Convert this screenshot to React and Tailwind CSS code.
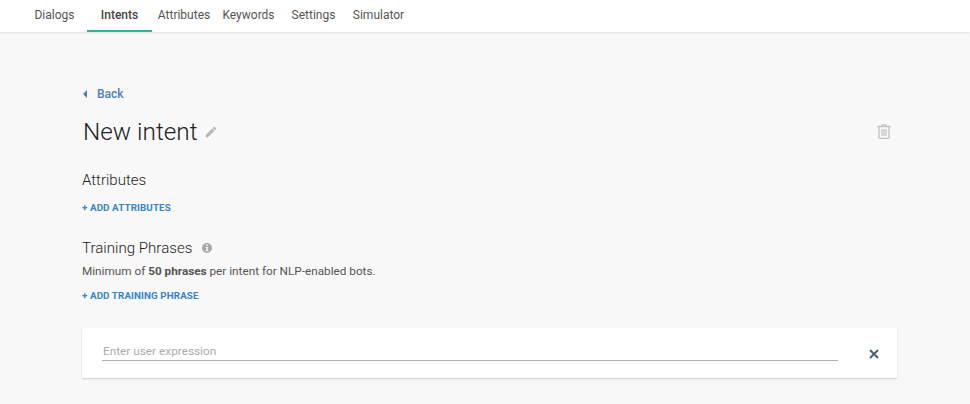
import React from 'react';

const tabs = [
  { label: 'Dialogs', w: 'w-[65px]' },
  { label: 'Intents', w: 'w-[65px]', active: true },
  { label: 'Attributes', w: 'w-[64px]' },
  { label: 'Keywords', w: 'w-[65px]' },
  { label: 'Settings', w: 'w-[65px]' },
  { label: 'Simulator', w: 'w-[65px]' },
];

function Pencil() {
  return (
    <svg width="14" height="14" viewBox="0 0 24 24" fill="#b5b5b5">
      <path d="M3 17.25V21h3.75L17.81 9.94l-3.75-3.75L3 17.25zM20.71 7.04a1 1 0 0 0 0-1.41l-2.34-2.34a1 1 0 0 0-1.41 0l-1.83 1.83 3.75 3.75 1.83-1.83z" />
    </svg>
  );
}

function Trash() {
  return (
    <svg className="mb-[1px]" width="14" height="15" viewBox="0 0 14 15" fill="none" stroke="#c2c2c2">
      <path d="M0.5 2.5h13" strokeWidth="1.4" />
      <path d="M5 2.5V0.8h4v1.7" strokeWidth="1.2" />
      <path d="M2 3v10.2c0 .7.5 1.2 1.2 1.2h7.6c.7 0 1.2-.5 1.2-1.2V3" strokeWidth="1.3" />
      <path d="M5 5v7M7 5v7M9 5v7" strokeWidth="1.2" />
    </svg>
  );
}

function Info() {
  return (
    <svg width="10" height="10" viewBox="0 0 10 10">
      <circle cx="5" cy="5" r="5" fill="#a8a8a8" />
      <rect x="4.2" y="1.6" width="1.6" height="1.5" fill="#f8f8f8" />
      <path d="M3.6 4h2.2v3.4h.7v.9H3.6v-.9h.7V4.9h-.7z" fill="#f8f8f8" />
    </svg>
  );
}

function App() {
  return (
    <div className="h-[404px] w-[970px] overflow-hidden bg-[#f8f8f8] font-['Roboto',sans-serif] text-[#555]">
      <nav className="flex h-[32px] bg-white pl-[22px] shadow-[0_1px_2px_rgba(0,0,0,0.1)]">
        {tabs.map(tab => (
          <div
            key={tab.label}
            className={`${tab.w} flex h-[32px] items-start justify-center whitespace-nowrap pt-[7px] text-[12px] leading-[16px] ${tab.active ? 'border-b-2 border-[#2bb594] font-medium text-[#444]' : ''}`}
          >
            {tab.label}
          </div>
        ))}
      </nav>

      <main className="flex w-[897px] flex-col pl-[82px] pt-[54px]">
        <a className="flex h-[16px] items-center text-[12px] font-medium leading-[16px] text-[#4a7fb8]">
          <span className="ml-[1px] mr-[10px] h-0 w-0 border-y-[4px] border-r-[4px] border-y-transparent border-r-[#4a7fb8]" />
          Back
        </a>

        <div className="mt-[15px] flex h-[30px] items-center justify-between pr-[6px]">
          <div className="flex items-center">
            <h1 className="ml-[1px] text-[24.3px] font-light leading-[30px] text-[#222]">New intent</h1>
            <span className="ml-[7px] flex"><Pencil /></span>
          </div>
          <Trash />
        </div>

        <h2 className="mt-[23px] text-[15px] font-light leading-[20px] text-[#222]">Attributes</h2>
        <a className="mt-[11px] text-[9.8px] font-bold uppercase leading-[14px] tracking-[0.1px] text-[#3a84c4]">+ Add attributes</a>

        <div className="mt-[23px] flex h-[20px] items-center">
          <h2 className="text-[15.1px] font-light leading-[20px] text-[#222]">Training Phrases</h2>
          <span className="ml-[10px] flex"><Info /></span>
        </div>
        <p className="mt-[5px] text-[11.75px] leading-[16px] text-[#555]">
          Minimum of <b className="font-bold">50 phrases</b> per intent for NLP-enabled bots.
        </p>
        <a className="mt-[10px] text-[9.8px] font-bold uppercase leading-[14px] tracking-[0.1px] text-[#3a84c4]">+ Add training phrase</a>

        <div className="mt-[25px] flex h-[50px] items-center rounded-[1px] bg-white pl-[20px] pr-[18px] shadow-[0_1px_2px_rgba(0,0,0,0.18)]">
          <div className="mb-[6px] h-[22px] w-[736px] border-b border-[#b0b0b0] pl-[1px] pt-[1px] text-[11.8px] leading-[22px] text-[#aaa]">
            Enter user expression
          </div>
          <svg className="ml-auto mt-[2px]" width="10" height="10" viewBox="0 0 10 10" stroke="#4a6274" strokeWidth="2">
            <path d="M1 1l8 8M9 1l-8 8" />
          </svg>
        </div>
      </main>
    </div>
  );
}

export default App;
